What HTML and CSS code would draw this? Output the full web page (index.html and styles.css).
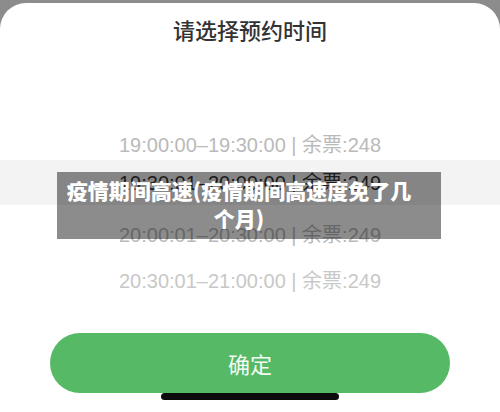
FILE: index.html
```html
<!DOCTYPE html>
<html lang="zh-CN">
<head>
<meta charset="utf-8">
<title>请选择预约时间</title>
<link rel="stylesheet" href="styles.css">
</head>
<body>
<div class="sheet">
  <h1 class="title">请选择预约时间</h1>
  <div class="picker">
    <div class="row row-1">19:00:00–19:30:00 | 余票:248</div>
    <div class="row row-sel">19:30:01–20:00:00 | 余票:249</div>
    <div class="row row-3">20:00:01–20:30:00 | 余票:249</div>
    <div class="row row-4">20:30:01–21:00:00 | 余票:249</div>
  </div>
  <div class="actions">
    <button class="confirm">确定</button>
    <div class="home-bar"></div>
  </div>
</div>
<div class="caption">疫情期间高速(疫情期间高速度免了几个月)</div>
</body>
</html>
```
FILE: styles.css
```css
html, body {
  margin: 0;
  padding: 0;
}
body {
  width: 500px;
  height: 412px;
  overflow: hidden;
  background: #8c8c8c;
  font-family: "Noto Sans CJK SC", "Noto Sans", sans-serif;
  position: relative;
}
.sheet {
  margin-top: 3px;
  height: 409px;
  background: #fff;
  border-radius: 26px 26px 0 0;
  display: flex;
  flex-direction: column;
}
.title {
  margin: 0;
  padding-top: 10px;
  height: 32px;
  line-height: 32px;
  text-align: center;
  font-size: 22px;
  font-weight: 500;
  color: #333;
}
.picker {
  margin-top: 75px;
  display: flex;
  flex-direction: column;
}
.row {
  display: flex;
  align-items: center;
  justify-content: center;
  font-family: "Liberation Sans", "Noto Sans CJK SC", sans-serif;
  font-size: 20px;
  color: #bababa;
  line-height: 24px;
  white-space: pre;
}
.row-1 {
  height: 30px;
  padding-top: 10px;
}
.row-sel {
  height: 45px;
  background: #f3f3f3;
  color: #333;
}
.row-3 {
  height: 60px;
}
.row-4 {
  height: 32px;
  color: #c8c8c8;
}
.actions {
  margin-top: 36px;
  display: flex;
  flex-direction: column;
  align-items: center;
}
.confirm {
  width: 400px;
  height: 60px;
  border: none;
  border-radius: 30px;
  background: #55b966;
  color: #f4fbf4;
  font-family: inherit;
  font-size: 22px;
  padding: 0;
}
.home-bar {
  width: 178px;
  height: 7px;
  border-radius: 4px;
  background: #0c0c0c;
}
.caption {
  position: absolute;
  left: 57px;
  top: 172px;
  width: 384px;
  height: 67px;
  box-sizing: border-box;
  padding: 4px 28px 0 8px;
  background: rgba(0, 0, 0, 0.45);
  color: #fff;
  font-weight: 900;
  font-size: 21px;
  line-height: 28px;
  text-align: center;
}
```
